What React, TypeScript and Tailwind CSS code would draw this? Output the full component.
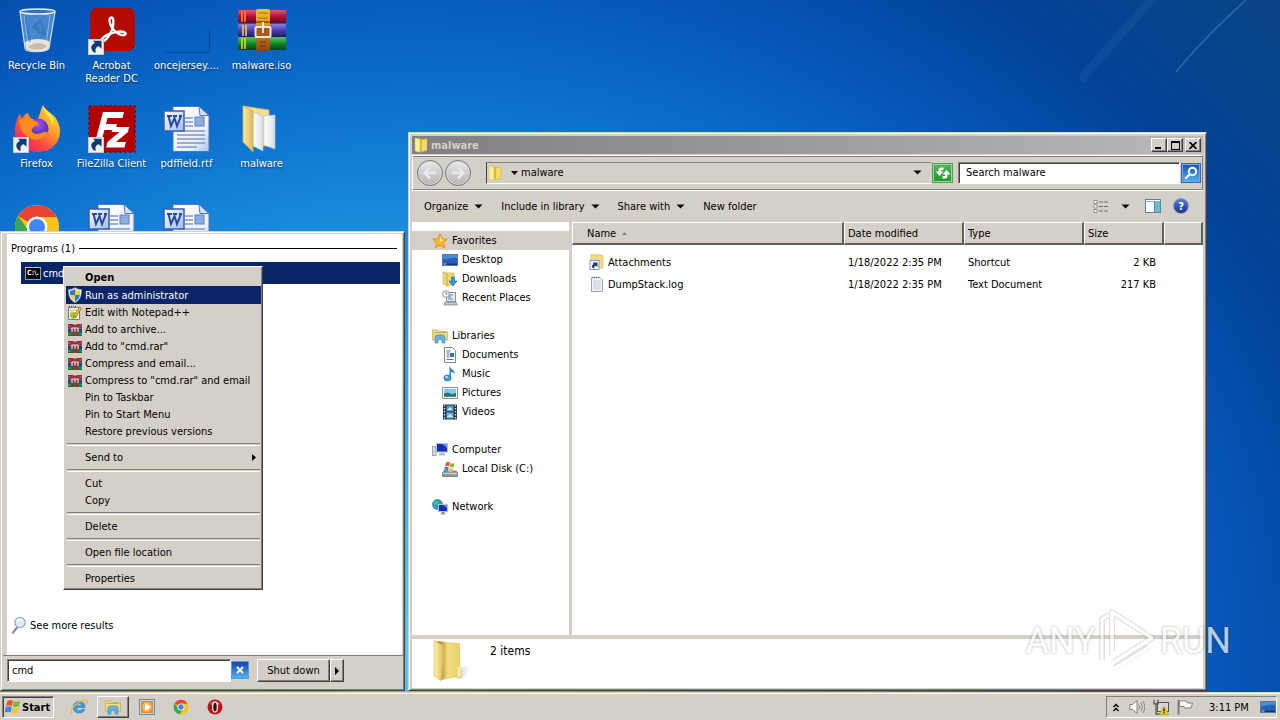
import type { ReactNode } from "react";

/* ---------- small building blocks ---------- */

function Svg({ box, size, children }: { box: string; size: string; children: ReactNode }) {
  return (
    <svg viewBox={box} className={`block shrink-0 ${size}`} aria-hidden="true">
      {children}
    </svg>
  );
}

const ShortcutArrow = () => (
  <g>
    <rect x="0.5" y="32.5" width="15" height="15" fill="#eef2f8" stroke="#c5ccd8" />
    <path d="M6 45.500c-4-3.500-3.500-8 1-9.500L5 33.800h8.500v8l-2.600-2.600c-3 .8-4.200 3-2.900 6.300z" fill="#15396f" />
  </g>
);

/* ---------- desktop icons, 48 px ---------- */

const RecycleBin = () => (
  <Svg box="0 0 48 48" size="size-12">
    <path d="M7 5l5 36c0 5 22 5 24 0l6-36z" fill="#9cc6ee" fillOpacity=".45" />
    <path d="M12 35l1 6c2 5 21 5 23 0l1-6c-5-4-19-4-25 0z" fill="#e9e4dc" />
    <path d="M15 40c5-5 14-5 19-1-1 4-15 5-19 1z" fill="#c7bcb0" />
    <path d="M12 9l5 26M20 20l8-6 4 14z" stroke="#2670b8" strokeOpacity=".5" strokeWidth="2" fill="#3a80c4" fillOpacity=".35" />
    <path d="M31 9l-9 9 6 12 8-16" stroke="#2670b8" strokeOpacity=".35" strokeWidth="1.500" fill="none" />
    <path d="M11 8l4 30M37 8l-4 30" stroke="#d7ebfa" strokeOpacity=".5" fill="none" />
    <path d="M7 5l5 36c0 5 22 5 24 0l6-36" fill="none" stroke="#cfe2f2" strokeWidth="1.200" />
    <ellipse cx="24.500" cy="4.500" rx="17.500" ry="2.600" fill="#3374b8" stroke="#e2edf6" strokeWidth="1.500" />
  </Svg>
);

const Acrobat = () => (
  <Svg box="0 0 48 48" size="size-12">
    <rect x="2" y="1" width="45" height="43" rx="7" fill="#b30b00" />
    <path
      d="M13 34c3 2 8-4 11-11 2-6 2-12-.5-12.500-3-.2-2.500 6 1 11 3 4.500 9 7.500 12 6.500 2.500-1.200 1-3.500-4-3.500-7 0-18 4-19.500 9.500z"
      fill="none"
      stroke="#fff"
      strokeWidth="2.400"
      strokeLinejoin="round"
    />
    <ShortcutArrow />
  </Svg>
);

const BlankThumb = () => (
  <Svg box="0 0 48 48" size="size-12">
    <path d="M46.500 22v23.500H2" fill="none" stroke="#02306f" strokeOpacity=".45" strokeWidth="1.200" />
  </Svg>
);

const WinRar = () => (
  <Svg box="0 0 48 48" size="size-12">
    <defs>
      <linearGradient id="wr-r" x2="0" y2="1"><stop offset="0" stopColor="#e05a6c" /><stop offset=".5" stopColor="#b31236" /><stop offset="1" stopColor="#5e0a20" /></linearGradient>
      <linearGradient id="wr-b" x2="0" y2="1"><stop offset="0" stopColor="#8a80e0" /><stop offset=".5" stopColor="#4a3cb0" /><stop offset="1" stopColor="#211860" /></linearGradient>
      <linearGradient id="wr-g" x2="0" y2="1"><stop offset="0" stopColor="#58c860" /><stop offset=".5" stopColor="#128a28" /><stop offset="1" stopColor="#06420f" /></linearGradient>
      <linearGradient id="wr-s" x2="0" y2="1"><stop offset="0" stopColor="#f6c52c" /><stop offset=".6" stopColor="#c77a1e" /><stop offset="1" stopColor="#8a4512" /></linearGradient>
    </defs>
    <rect x="0" y="3" width="49" height="13" rx="2" fill="url(#wr-r)" />
    <rect x="0" y="17" width="49" height="13" rx="2" fill="url(#wr-b)" />
    <rect x="0" y="30" width="49" height="13" rx="2" fill="url(#wr-g)" />
    <path d="M4 4v11M7 4v11" stroke="#f08820" strokeWidth="1.600" />
    <path d="M5 18v11M8 18v11" stroke="#f2d23a" strokeWidth="1.600" />
    <path d="M4 31v11M7 31v11" stroke="#e6d430" strokeWidth="1.600" />
    <rect x="18" y="2" width="14" height="42" rx="2" fill="url(#wr-s)" />
    <path d="M20 6h10M20 11h10" stroke="#a8690f" />
    <path d="M18 15h14" stroke="#8a4512" strokeWidth="1.500" />
    <rect x="17.500" y="20" width="15" height="10" rx="1.500" fill="#a85a1c" stroke="#efe6da" strokeWidth="2" />
    <path d="M25 15v11" stroke="#fff" strokeWidth="1.600" />
    <path d="M22 35h6M22 39h6" stroke="#6b3510" strokeWidth="1.200" />
  </Svg>
);

const Firefox = () => (
  <Svg box="0 0 48 48" size="size-12">
    <defs>
      <linearGradient id="ff-o" x1="1" y1="0" x2=".2" y2="1"><stop offset="0" stopColor="#fff24a" /><stop offset=".4" stopColor="#ffa32a" /><stop offset=".7" stopColor="#ff4a3f" /><stop offset="1" stopColor="#e0206c" /></linearGradient>
      <radialGradient id="ff-p" cx=".5" cy=".3"><stop offset="0" stopColor="#b14cf0" /><stop offset="1" stopColor="#4a38b8" /></radialGradient>
    </defs>
    <path d="M30 0c2 5 8 8 12 12 3 4 5 9 5 14 0 12-9 21-22 21S2 38 2 26c0-7 2-13 5-17l2 5c1-3 3-5 6-6 1 4 4 7 9 7 3-4 3-9 6-15z" fill="url(#ff-o)" />
    <circle cx="25" cy="24" r="10.500" fill="url(#ff-p)" />
    <path d="M6 15c5-4 10-3 12 0 4 0 7 2 8 5-3 0-6 2-7 4s1 5 5 5c5 0 7-3 11-2-2 7-11 10-18 6S6 24 6 15z" fill="#ff8a1e" />
    <path d="M30 1c1 8 8 10 9 19 4-5 0-10-3-13-3-2-5-4-6-6z" fill="#ffe83c" />
    <ShortcutArrow />
  </Svg>
);

const FileZilla = () => (
  <Svg box="0 0 48 48" size="size-12">
    <rect x="1" y="1" width="46" height="46" fill="#b30000" stroke="#7c0a12" strokeWidth="1.500" strokeDasharray="3 2" />
    <path d="M15 7h21l-1.500 6H19.500l-1.500 6h11l-1.500 6H16.500L13 37H7z" fill="#fff" />
    <path d="M25 22h16l-1 5-12 10h10l-1.500 5.500H18l1.500-5.500 12-10h-8z" fill="#fff" />
    <ShortcutArrow />
  </Svg>
);

const WordDoc = () => (
  <Svg box="0 0 48 48" size="size-12">
    <defs>
      <linearGradient id="wd-p" x2="1" y2="1"><stop offset="0" stopColor="#fff" /><stop offset=".7" stopColor="#eaf1fc" /><stop offset="1" stopColor="#a9c4ee" /></linearGradient>
      <linearGradient id="wd-b" x2="1" y2="1"><stop offset="0" stopColor="#fff" /><stop offset="1" stopColor="#9dbcf0" /></linearGradient>
    </defs>
    <path d="M10 1.500h26l10 9v36H10z" fill="url(#wd-p)" stroke="#5573b8" />
    <path d="M36 1.500l1 9h9z" fill="#d5e2f8" stroke="#5573b8" />
    <rect x="32" y="12" width="9" height="9" fill="#8facdf" stroke="#5f7fc0" />
    <path d="M22 13h8M22 17h8M22 21h8M14 26h28M14 30h28M14 34h28M14 38h28M14 42h20" stroke="#7f96c8" strokeWidth="1.300" />
    <rect x="1" y="6" width="20" height="20" fill="url(#wd-b)" stroke="#3a5cae" strokeWidth="1.500" />
    <path d="M4 11h5M5.500 11l2.500 10 3.500-8 2.500 8 4-10M10 11h4M16 11h3" fill="none" stroke="#27479c" strokeWidth="2" />
  </Svg>
);

const FolderOpen = () => (
  <Svg box="0 0 48 48" size="size-12">
    <defs>
      <linearGradient id="fo-f" x2="1"><stop offset="0" stopColor="#f8e9a4" /><stop offset="1" stopColor="#dcb75c" /></linearGradient>
      <linearGradient id="fo-p" x2="1"><stop offset="0" stopColor="#fff" /><stop offset="1" stopColor="#d8dde4" /></linearGradient>
    </defs>
    <path d="M5 1l26 4v36H14z" fill="#f1dd94" stroke="#d0b060" strokeWidth=".8" />
    <path d="M15 7l10 4v35l-10-5z" fill="url(#fo-p)" stroke="#c3c3c3" strokeWidth=".6" />
    <path d="M26 11l11-1v34l-11-4z" fill="url(#fo-p)" stroke="#c3c3c3" strokeWidth=".6" />
    <path d="M5 1l10 5v41L5 37z" fill="url(#fo-f)" stroke="#cfae58" strokeWidth=".8" />
  </Svg>
);

const Chrome = ({ size = "size-12", shortcut = false }: { size?: string; shortcut?: boolean }) => (
  <Svg box="0 0 48 48" size={size}>
    <circle cx="24" cy="24" r="22" fill="#fbc116" />
    <path d="M24 24L5 13A22 22 0 0 1 43.500 14H24z" fill="#ea4335" />
    <path d="M5 13a22 22 0 0 0 16 33l10-17-7-5-8 4z" fill="#34a853" />
    <path d="M24 14h19.500A22 22 0 0 1 21 46l11-18z" fill="#fbc116" />
    <circle cx="24" cy="24" r="10.500" fill="#fff" />
    <circle cx="24" cy="24" r="8" fill="#4285f4" />
    {shortcut && <ShortcutArrow />}
  </Svg>
);

/* ---------- 16 px icons ---------- */

const MiniFolder = ({ size = "size-4" }: { size?: string }) => (
  <Svg box="0 0 16 16" size={size}>
    <path d="M5 1.500l8 1V13l-8 2z" fill="#d9b73c" />
    <path d="M8.500 3l5.500-1.500v12L8.500 15z" fill="#f3dc68" stroke="#c9a93a" strokeWidth=".5" />
    <path d="M2 .8l5 1.700V15.500L2 14z" fill="#fbee9c" stroke="#d6b84a" strokeWidth=".5" />
  </Svg>
);

const BigFolder = () => (
  <Svg box="0 0 40 46" size="w-10 h-[46px]">
    <defs>
      <linearGradient id="bf-a" x2="1"><stop offset="0" stopColor="#fbf0a8" /><stop offset="1" stopColor="#e3c05a" /></linearGradient>
      <linearGradient id="bf-b" x2="1"><stop offset=".2" stopColor="#b8923a" /><stop offset=".5" stopColor="#f2df85" /><stop offset="1" stopColor="#e9cf68" /></linearGradient>
      <linearGradient id="bf-s" x2="1"><stop offset="0" stopColor="#777" stopOpacity=".7" /><stop offset="1" stopColor="#999" stopOpacity="0" /></linearGradient>
    </defs>
    <path d="M26 40l4-12 8-1v5l-7 7-15 3z" fill="url(#bf-s)" />
    <path d="M4 2l24 2v34l-19 3z" fill="url(#bf-b)" />
    <path d="M25 29q2-4 4 0v9l-4 1z" fill="#f8ebaa" stroke="#d9bd5c" strokeWidth=".5" />
    <path d="M2 1l9 6c1 12-1 20-2 35L2 37z" fill="url(#bf-a)" stroke="#dcc060" strokeWidth=".6" />
  </Svg>
);

const Star = () => (
  <Svg box="0 0 16 16" size="size-4">
    <path d="M8 .8l2.200 4.800 5.200.6-3.900 3.500 1.100 5.200L8 12.300l-4.600 2.600 1.100-5.200L.6 6.200l5.200-.6z" fill="#ffb52c" stroke="#e08a1c" strokeWidth=".9" />
    <path d="M8 3l1.400 3.400 3.600.4-5 1.800z" fill="#fff2a8" />
  </Svg>
);

const MonitorIcon = () => (
  <Svg box="0 0 16 16" size="size-4">
    <rect x=".5" y="2.500" width="15" height="11" fill="#2660b8" stroke="#5878a8" />
    <path d="M1 3h14v3C9 5 5 8 1 7z" fill="#4a8cd8" />
    <path d="M1 11.500h14v1.500H1z" fill="#15357a" />
    <path d="M1.500 12h3" stroke="#bcd8f0" />
  </Svg>
);

const DownloadsIcon = () => (
  <Svg box="0 0 16 16" size="size-4">
    <path d="M1 1l4 1v13l-4-2zM5 2h7v11l-7 2z" fill="#f0d870" stroke="#c9a73c" strokeWidth=".6" />
    <path d="M9.500 6h3v4h2.500l-4 5-4-5h2.500z" fill="#2f95e4" stroke="#1565ae" strokeWidth=".6" />
  </Svg>
);

const RecentIcon = () => (
  <Svg box="0 0 16 16" size="size-4">
    <rect x="4.500" y="2.500" width="9" height="9" fill="#e6ebf2" stroke="#8592a6" />
    <path d="M6 5h5M6 7h3M6 9h5" stroke="#5b7fb5" />
    <path d="M3 12h11l1.500 3H2z" fill="#c0c5cc" stroke="#7d848f" strokeWidth=".7" />
    <circle cx="4" cy="4" r="3.300" fill="#fff" stroke="#8592a6" />
    <path d="M4 2v2h1.500" stroke="#444" strokeWidth=".8" fill="none" />
  </Svg>
);

const LibraryIcon = () => (
  <Svg box="0 0 16 16" size="size-4">
    <path d="M.5 2h5l1 1.500h9V12H.5z" fill="#f2dc7c" stroke="#c9a73c" strokeWidth=".7" />
    <path d="M2 4.500h12" stroke="#8fc46a" />
    <path d="M3 15V9.500Q3 7 5.500 7h5Q13 7 13 9.500V15h-3v-4H6v4z" fill="#63b4e8" stroke="#2f7fb8" strokeWidth=".6" />
  </Svg>
);

const DocumentIcon = () => (
  <Svg box="0 0 16 16" size="size-4">
    <path d="M2.500.5h8l3 3v12h-11z" fill="#fff" stroke="#7c8798" />
    <path d="M4.500 4h4M4.500 6h3M4.500 8h3M4.500 10h3M4.500 12.500h7" stroke="#5b7396" />
    <rect x="8" y="6" width="4" height="4" fill="#2f6fc4" />
  </Svg>
);

const MusicIcon = () => (
  <Svg box="0 0 16 16" size="size-4">
    <path d="M8 .5c.5 3 5 3 4.500 8-1-2-2.500-2.500-3.500-2.500v6.500H7.500V.5z" fill="#2a86d8" />
    <ellipse cx="5.500" cy="12" rx="3.700" ry="3" fill="#3f9ce8" stroke="#1862a8" strokeWidth=".6" />
    <ellipse cx="4.700" cy="11" rx="1.500" ry="1" fill="#b8dffa" />
  </Svg>
);

const PictureIcon = () => (
  <Svg box="0 0 16 16" size="size-4">
    <rect x=".5" y="2.500" width="15" height="11" fill="#fff" stroke="#8b939e" />
    <rect x="2" y="4" width="12" height="8" fill="#7ccbf0" />
    <path d="M2 9c3-2 5-1 7 0s3-1 5-1v4H2z" fill="#236e80" />
    <path d="M2 11h12v1H2z" fill="#3da050" />
  </Svg>
);

const VideoIcon = () => (
  <Svg box="0 0 16 16" size="size-4">
    <rect x="1" y=".5" width="14" height="15" fill="#27313f" />
    <path d="M2.500 1v14M13.500 1v14" stroke="#d8dde4" strokeWidth="1.400" strokeDasharray="1.500 1.500" />
    <rect x="4.500" y="1.500" width="7" height="6" fill="#4a9ad8" />
    <rect x="4.500" y="8.500" width="7" height="6" fill="#66b2e6" />
    <path d="M5 6l3-3 3 3zM5 13l3-3 3 3z" fill="#cdeaf8" />
  </Svg>
);

const ComputerIcon = () => (
  <Svg box="0 0 16 16" size="size-4">
    <rect x=".5" y="4.500" width="3.500" height="9" fill="#d3d8de" stroke="#8b939e" strokeWidth=".8" />
    <rect x="4.500" y="1.500" width="11" height="8.500" fill="#1530b0" stroke="#b6c0cf" />
    <path d="M10 2h5v4z" fill="#6f8cf0" />
    <path d="M8 10.500h4l1.500 3h-7z" fill="#b8bec8" />
  </Svg>
);

const DiskIcon = () => (
  <Svg box="0 0 16 16" size="size-4">
    <path d="M2 10h12l1.500 2v3.500H.5V12z" fill="#8f9aa6" stroke="#5c6672" strokeWidth=".7" />
    <path d="M1 12.500h14" stroke="#cbd3da" />
    <circle cx="13" cy="14" r=".9" fill="#5fdc4a" />
    <path d="M4 1.500q2-1.500 4 0L7 5.500q-2-1.200-4 0z" fill="#e8602c" />
    <path d="M8.700 2q2 1 4 0l-1 3.800q-2 1-4 0z" fill="#7cb83c" />
    <path d="M2.800 6.300q2-1.300 4 0l-1 3.700q-2-1-4 0z" fill="#3b8ad8" />
    <path d="M7.500 6.800q2 1 4 0l-1 3.600q-2 1-4 0z" fill="#f4c430" />
  </Svg>
);

const NetworkIcon = () => (
  <Svg box="0 0 16 16" size="size-4">
    <circle cx="5.500" cy="5.500" r="5" fill="#2f9ad0" stroke="#1d6a9c" strokeWidth=".6" />
    <path d="M2 3q3-2 4 0t-2 3q-2 0-2-3M7 7q2-1 2 1t-2 2z" fill="#56c06a" />
    <rect x="6.500" y="5.500" width="9" height="7" fill="#1530b0" stroke="#b6c0cf" />
    <path d="M11 6h4v3z" fill="#6f8cf0" />
    <path d="M9.500 13h3l1 2.500h-5z" fill="#8f98a8" />
  </Svg>
);

const ShortcutFolder = () => (
  <Svg box="0 0 16 16" size="size-4">
    <path d="M2 .8l9 0 3 1v12l-12 1z" fill="#f2dc7c" stroke="#cfae50" strokeWidth=".6" />
    <rect x="1" y="6.500" width="9" height="9" fill="#fff" stroke="#8898b0" />
    <path d="M4 14.300c-1.600-2-1.200-3.600.6-4.400L3.600 8.600h4.900v4.600L7 11.800c-1.400.3-2 1.100-1.600 2.500z" fill="#15396f" />
  </Svg>
);

const LogFile = () => (
  <Svg box="0 0 16 16" size="size-4">
    <path d="M2.500 1.500h8.500l2.500 2.500v11.500h-11z" fill="#f6f8fa" stroke="#98a2ae" />
    <path d="M4 5h8M4 7h8M4 9h8M4 11h8M4 13h8" stroke="#b3c3d3" strokeWidth=".9" />
    <path d="M3 1.500h8" stroke="#6f7a88" strokeWidth="1.500" strokeDasharray="1 1" />
  </Svg>
);

const Shield = () => (
  <Svg box="0 0 16 16" size="size-4">
    <path d="M8 .5C6 2 4 2.500 1.500 2.500c0 6 1 10.500 6.500 13 5.500-2.500 6.500-7 6.500-13C12 2.500 10 2 8 .5z" fill="#eef2f6" stroke="#9aa6b4" strokeWidth=".6" />
    <path d="M8 2C6.500 3 5 3.600 3 3.700V8h5z" fill="#2c78d0" />
    <path d="M8 2c1.500 1 3 1.600 5 1.700V8H8z" fill="#f8d23c" />
    <path d="M3.100 8c.5 3 2 5 4.900 6.300V8z" fill="#f8d23c" />
    <path d="M12.900 8c-.5 3-2 5-4.900 6.300V8z" fill="#2c78d0" />
  </Svg>
);

const NotepadIcon = () => (
  <Svg box="0 0 16 16" size="size-4">
    <path d="M1.500 2.500h11v12h-11z" fill="#fbfbf4" stroke="#77806a" />
    <path d="M3 5h8M3 7h4" stroke="#b0b8a0" />
    <path d="M3 8l4-1 4 2-1 4-5 1-2-2z" fill="#9ccc3c" />
    <path d="M7 10l5.500-8 2 1.500-5.500 8-2.500 1z" fill="#f2b632" stroke="#8a5a14" strokeWidth=".6" />
    <path d="M2 1.500h8" stroke="#555" strokeDasharray="1 1" />
  </Svg>
);

const RarIcon = () => (
  <Svg box="0 0 16 16" size="size-4">
    <rect x="1" y="2" width="14" height="4.500" fill="#a81c34" />
    <rect x="1" y="6.500" width="14" height="4" fill="#3a3f80" />
    <rect x="1" y="10" width="14" height="4" fill="#107030" />
    <path d="M1 4h3M12 4h3M1 12h3M12 12h3" stroke="#35a8a8" />
    <rect x="5.500" y="2" width="5" height="12" fill="#8a3a30" />
    <path d="M5 10V6h6v4M8 6v3.500" fill="none" stroke="#f2dcdc" strokeWidth="1.200" />
    <path d="M6 2.500h4" stroke="#d08050" />
  </Svg>
);

const CmdIcon = () => (
  <span className="flex h-[13px] w-4 shrink-0 items-center justify-center border border-t-[#b8c4dc] border-[#9a9a9a] bg-black pt-px text-[7px] leading-none font-bold text-white">
    C:\.
  </span>
);

const Flag4 = ({ size = "size-4" }: { size?: string }) => (
  <Svg box="0 0 16 16" size={size}>
    <path d="M2.500 2q3-2 5.500-.3L7 7Q4 5.500 1 7z" fill="#e8532a" />
    <path d="M8.800 2q3 1.500 6.200 0L14 7.300q-3 1.500-6 0z" fill="#7db83a" />
    <path d="M.8 8q3-1.500 6 .2L5.700 13.500Q3 12-.2 13.500z" fill="#3f86d6" />
    <path d="M7.700 8.600q3 1.500 6 0l-1 5.200q-3 1.700-6 0z" fill="#f6c52e" />
  </Svg>
);

const Caret = () => (
  <Svg box="0 0 9 5" size="w-[9px] h-[5px]">
    <path d="M.5.500h8L4.500 4.500z" fill="#000" />
  </Svg>
);

/* ---------- desktop ---------- */

const desktopIcons: { label: string; icon: ReactNode }[] = [
  { label: "Recycle Bin", icon: <RecycleBin /> },
  { label: "Acrobat Reader DC", icon: <Acrobat /> },
  { label: "oncejersey....", icon: <BlankThumb /> },
  { label: "malware.iso", icon: <WinRar /> },
  { label: "Firefox", icon: <Firefox /> },
  { label: "FileZilla Client", icon: <FileZilla /> },
  { label: "pdffield.rtf", icon: <WordDoc /> },
  { label: "malware", icon: <FolderOpen /> },
  { label: "", icon: <Chrome shortcut /> },
  { label: "", icon: <WordDoc /> },
  { label: "", icon: <WordDoc /> },
];

function Desktop() {
  return (
    <ul className="-ml-px grid w-[300px] auto-rows-[98px] grid-cols-4">
      {desktopIcons.map((d, i) => (
        <li key={i} className="flex flex-col items-center pt-[7px]">
          {d.icon}
          <span className="mt-1 w-[74px] text-center leading-[13px] text-white [text-shadow:0_1px_2px_#000a]">{d.label}</span>
        </li>
      ))}
    </ul>
  );
}

/* ---------- start menu ---------- */

type Item = { label: string; icon?: ReactNode; bold?: boolean; active?: boolean; sub?: boolean; tall?: boolean };

const contextGroups: Item[][] = [
  [
    { label: "Open", bold: true, tall: true },
    { label: "Run as administrator", icon: <Shield />, active: true, tall: true },
    { label: "Edit with Notepad++", icon: <NotepadIcon /> },
    { label: "Add to archive...", icon: <RarIcon /> },
    { label: 'Add to "cmd.rar"', icon: <RarIcon /> },
    { label: "Compress and email...", icon: <RarIcon /> },
    { label: 'Compress to "cmd.rar" and email', icon: <RarIcon /> },
    { label: "Pin to Taskbar" },
    { label: "Pin to Start Menu" },
    { label: "Restore previous versions" },
  ],
  [{ label: "Send to", sub: true }],
  [{ label: "Cut" }, { label: "Copy" }],
  [{ label: "Delete" }],
  [{ label: "Open file location" }],
  [{ label: "Properties" }],
];

function ContextMenu() {
  return (
    <div
      role="menu"
      className="absolute top-8 left-14 w-[200px] border border-t-white border-r-[#404040] border-b-[#404040] border-l-white bg-[#d4d0c8] p-px pl-[2px] pb-[2px] shadow-[inset_-1px_-1px_0_#808080]"
    >
      {contextGroups.map((group, g) => (
        <div key={g}>
          {g > 0 && <div className="mx-px my-[3px] h-[3px] border-t border-b border-t-[#808080] border-b-white" />}
          {group.map((item) => (
            <button
              key={item.label}
              role="menuitem"
              className={`flex w-full items-center pr-[5px] pl-px text-left whitespace-nowrap ${item.tall ? "h-[18px]" : "h-[17px]"} ${
                item.active ? "bg-[#0a246a] text-white" : ""
              } ${item.bold ? "font-bold" : ""}`}
            >
              <span className="mr-px w-[17px] shrink-0">{item.icon}</span>
              <span className="flex-1">{item.label}</span>
              {item.sub && (
                <Svg box="0 0 4 7" size="w-1 h-[7px]">
                  <path d="M0 0l4 3.500L0 7z" fill="#000" />
                </Svg>
              )}
            </button>
          ))}
        </div>
      ))}
    </div>
  );
}

const raised = "border border-t-white border-l-white border-r-[#404040] border-b-[#404040] shadow-[inset_-1px_-1px_0_#808080] bg-[#d4d0c8]";
const sunken = "border border-t-[#808080] border-l-[#808080] border-r-white border-b-white shadow-[inset_1px_1px_0_#404040]";

function StartMenu() {
  return (
    <section
      aria-label="Start menu"
      className="absolute bottom-px left-0 flex h-[460px] w-[405px] flex-col border border-t-[#d4d0c8] border-r-[#404040] border-b-[#404040] border-l-[#d4d0c8] bg-[#d4d0c8] p-px pl-[2px] shadow-[inset_1px_1px_0_#fff,inset_-1px_-1px_0_#808080]"
    >
      <div className="relative mt-px mr-px ml-1 flex flex-1 flex-col bg-white">
        <div className="flex h-7 items-center gap-[7px] pr-[5px] pl-1">
          <span className="w-[61px] whitespace-nowrap">Programs (1)</span>
          <span className="h-px flex-1 bg-black" />
        </div>
        <button className="mr-[2px] ml-[14px] flex h-[22px] items-center gap-[2px] bg-[#0a246a] pl-1 text-white">
          <CmdIcon />
          cmd
        </button>
        <div className="flex-1" />
        <a href="#results" className="mb-5 ml-1 flex h-5 items-center gap-[3px]">
          <Svg box="0 0 16 18" size="w-4 h-[18px]">
            <path d="M6.500 11L2 16.500" stroke="#8c8f94" strokeWidth="2.400" strokeLinecap="round" />
            <circle cx="9" cy="6.500" r="5.200" fill="#d7ebfa" stroke="#9aa5b0" strokeWidth="1.200" />
            <path d="M6 5.500q2-3 5-1.500" stroke="#fff" strokeWidth="1.500" fill="none" />
          </Svg>
          See more results
        </a>
        <ContextMenu />
      </div>
      <div className="flex h-[34px] items-start border-t border-[#808080] pt-[3px] pl-1">
        <input
          aria-label="Search programs and files"
          defaultValue="cmd"
          className={`h-[23px] w-[224px] bg-white px-1 outline-none ${sunken}`}
        />
        <button aria-label="Clear search" className="mt-[2px] flex h-[18px] w-[18px] items-center justify-center border border-[#5c9bd8] bg-linear-to-b from-[#1c3fae] to-[#4fb4ec]">
          <Svg box="0 0 8 8" size="size-2">
            <path d="M1 1l6 6M7 1L1 7" stroke="#fff" strokeWidth="1.800" />
          </Svg>
        </button>
        <div className="ml-2 flex">
          <button className={`h-[23px] w-[73px] ${raised}`}>Shut down</button>
          <button aria-label="Shut down options" className={`flex h-[23px] w-[14px] items-center justify-center ${raised}`}>
            <Svg box="0 0 4 8" size="w-1 h-2">
              <path d="M0 0l4 4-4 4z" fill="#000" />
            </Svg>
          </button>
        </div>
      </div>
    </section>
  );
}

/* ---------- explorer window ---------- */

const navGroups: { head: string; icon: ReactNode; active?: boolean; items: { label: string; icon: ReactNode }[] }[] = [
  {
    head: "Favorites",
    icon: <Star />,
    active: true,
    items: [
      { label: "Desktop", icon: <MonitorIcon /> },
      { label: "Downloads", icon: <DownloadsIcon /> },
      { label: "Recent Places", icon: <RecentIcon /> },
    ],
  },
  {
    head: "Libraries",
    icon: <LibraryIcon />,
    items: [
      { label: "Documents", icon: <DocumentIcon /> },
      { label: "Music", icon: <MusicIcon /> },
      { label: "Pictures", icon: <PictureIcon /> },
      { label: "Videos", icon: <VideoIcon /> },
    ],
  },
  { head: "Computer", icon: <ComputerIcon />, items: [{ label: "Local Disk (C:)", icon: <DiskIcon /> }] },
  { head: "Network", icon: <NetworkIcon />, items: [] },
];

const files = [
  { name: "Attachments", icon: <ShortcutFolder />, date: "1/18/2022 2:35 PM", type: "Shortcut", size: "2 KB" },
  { name: "DumpStack.log", icon: <LogFile />, date: "1/18/2022 2:35 PM", type: "Text Document", size: "217 KB" },
];

const th =
  "h-[23px] border-t border-r-2 border-b-2 border-l border-t-white border-r-[#606060] border-b-[#606060] border-l-white bg-[#d4d0c8] px-[3px] text-left font-normal";

const RoundNav = ({ back = false }: { back?: boolean }) => (
  <button
    aria-label={back ? "Back" : "Forward"}
    className="flex size-[26px] items-center justify-center rounded-full border border-[#777] bg-linear-to-b from-[#e9e9e9] to-[#b5b5b5] shadow-[inset_0_0_0_1px_#dcdcdc]"
  >
    <Svg box="0 0 14 14" size="size-[14px]">
      <path d={back ? "M7 1.500L1.500 7 7 12.500M2 7h11" : "M7 1.500L12.500 7 7 12.500M12 7H1"} fill="none" stroke="#e9e9e9" strokeWidth="2.600" />
    </Svg>
  </button>
);

const caption = `flex h-[14px] items-center justify-center ${raised}`;

function Explorer() {
  return (
    <section
      aria-label="malware"
      className="absolute top-[132px] right-[73px] bottom-px left-[408px] flex flex-col border border-t-[#d4d0c8] border-r-[#404040] border-b-[#404040] border-l-[#d4d0c8] bg-[#d4d0c8] p-[3px] pb-[2px] shadow-[inset_1px_1px_0_#fff,inset_-1px_-1px_0_#808080]"
    >
      <header className="flex h-[18px] items-center gap-[2px] bg-linear-to-r from-[#808080] to-[#b9b9b7] pr-[2px] pl-px">
        <MiniFolder />
        <h1 className="flex-1 font-bold text-[#d4d0c8]">malware</h1>
        <div className="flex">
          <button aria-label="Minimize" className={`w-4 ${caption}`}>
            <span className="mt-[6px] mr-[2px] h-[2px] w-[6px] bg-black" />
          </button>
          <button aria-label="Maximize" className={`w-4 ${caption}`}>
            <span className="h-[9px] w-[9px] border border-t-2 border-black" />
          </button>
          <button aria-label="Close" className={`ml-[2px] w-4 ${caption}`}>
            <Svg box="0 0 8 7" size="w-2 h-[7px]">
              <path d="M.5 0l7 7M7.500 0l-7 7" stroke="#000" strokeWidth="1.600" />
            </Svg>
          </button>
        </div>
      </header>

      <div className="mt-px flex h-[35px] items-center border border-t-white border-r-[#808080] border-b-[#808080] border-l-white pr-px pl-1 shadow-[0_1px_0_#fff,inset_0_1px_0_#808080]">
        <div className="flex gap-[2px]">
          <RoundNav back />
          <RoundNav />
        </div>
        <div className="ml-[15px] flex h-[22px] flex-1 items-center border border-t-[#808080] border-r-[#d4d0c8] border-b-white border-l-[#404040] pr-[9px]">
          <MiniFolder />
          <Svg box="0 0 7 4" size="ml-2 w-[7px] h-1">
            <path d="M0 0h7L3.500 4z" fill="#000" />
          </Svg>
          <span className="ml-[3px] flex-1">malware</span>
          <button aria-label="Previous locations">
            <Caret />
          </button>
        </div>
        <button aria-label="Refresh" className="flex h-5 w-[21px] items-center justify-center border border-[#5a9a5a] bg-linear-to-b from-[#53b45a] to-[#159a2a] shadow-[inset_0_0_0_1px_#8fd896]">
          <Svg box="0 0 18 14" size="w-[18px] h-[14px]">
            <path d="M9.500 1.500H7Q4.500 1.500 4.500 4v1.500H1.500L5.500 10l4-4.500H7V4h2.500zM8.500 12.500H11q2.500 0 2.500-2.500V8.500h3L12.500 4l-4 4.500H11V10H8.500z" fill="#fff" />
          </Svg>
        </button>
        <input
          aria-label="Search malware"
          defaultValue="Search malware"
          className={`ml-[5px] h-[22px] w-[222px] bg-white px-[7px] outline-none ${sunken}`}
        />
        <button aria-label="Search" className="ml-px flex h-5 w-5 items-center justify-center border border-[#3a64c0] bg-linear-to-b from-[#2848c0] to-[#49b6f0] shadow-[inset_0_0_0_1px_#7aa4e8]">
          <Svg box="0 0 14 14" size="size-[14px]">
            <path d="M5.500 8.500L2 12" stroke="#fff" strokeWidth="2.400" strokeLinecap="round" />
            <circle cx="8.500" cy="5.500" r="3.700" fill="none" stroke="#fff" strokeWidth="2" />
          </Svg>
        </button>
      </div>

      <div role="toolbar" className="flex h-8 items-center gap-[18px] pr-[14px] pl-3 whitespace-nowrap">
        <button className="flex items-center gap-[6px]">
          Organize
          <Caret />
        </button>
        <button className="flex items-center gap-[6px]">
          Include in library
          <Caret />
        </button>
        <button className="flex items-center gap-[6px]">
          Share with
          <Caret />
        </button>
        <button>New folder</button>
        <div className="ml-auto flex items-center gap-3">
          <button aria-label="Change view">
            <Svg box="0 0 16 13" size="w-4 h-[13px]">
              <path d="M1 .5h3v3H1zM1 5h3v3H1zM1 9.500h3v3H1z" fill="#fff" stroke="#777" strokeWidth=".8" />
              <path d="M6 2h4M11 2h4M6 6.500h4M11 6.500h4M6 11h4M11 11h4" stroke="#66708a" />
            </Svg>
          </button>
          <button aria-label="More view options" className="mr-[3px]">
            <Caret />
          </button>
          <button aria-label="Preview pane">
            <Svg box="0 0 16 14" size="w-4 h-[14px]">
              <rect x=".5" y=".5" width="15" height="13" fill="#fff" stroke="#5f7ea8" />
              <path d="M.5 2.500h15" stroke="#8fb0d4" />
              <rect x="10" y="3" width="5" height="10" fill="#5cc4d0" />
              <path d="M9.500 2v12" stroke="#5f7ea8" />
            </Svg>
          </button>
          <button aria-label="Help" className="flex size-4 items-center justify-center rounded-full border border-[#8a98b8] bg-linear-to-b from-[#5a7cd8] to-[#1a2f96] text-[11px] leading-none font-bold text-white">
            ?
          </button>
        </div>
      </div>

      <div className="flex min-h-0 flex-1">
        <nav className="w-[157px] bg-white pt-[9px]">
          {navGroups.map((g) => (
            <div key={g.head} className="mb-[19px]">
              <a href="#nav" className={`flex h-[19px] items-center gap-1 pl-5 ${g.active ? "bg-[#d4d0c8]" : ""}`}>
                {g.icon}
                {g.head}
              </a>
              {g.items.map((it) => (
                <a key={it.label} href="#nav" className="flex h-[19px] items-center gap-1 pl-[30px]">
                  {it.icon}
                  {it.label}
                </a>
              ))}
            </div>
          ))}
        </nav>
        <div className="w-[3px] bg-[#d4d0c8]" />
        <div className="min-w-0 flex-1 bg-white">
          <table className="w-full table-fixed border-separate border-spacing-0">
            <colgroup>
              <col className="w-[272px]" />
              <col className="w-[120px]" />
              <col className="w-[120px]" />
              <col className="w-[80px]" />
              <col />
            </colgroup>
            <thead>
              <tr>
                <th className={th}>
                  <span className="flex items-center gap-[6px] pl-[11px]">
                    Name
                    <Svg box="0 0 5 3" size="w-[5px] h-[3px]">
                      <path d="M0 3h5L2.500 0z" fill="#808080" />
                    </Svg>
                  </span>
                </th>
                <th className={th}>Date modified</th>
                <th className={th}>Type</th>
                <th className={th}>Size</th>
                <th className={th} aria-label="More columns" />
              </tr>
            </thead>
            <tbody>
              <tr aria-hidden="true">
                <td colSpan={5} className="h-[6px]" />
              </tr>
              {files.map((f) => (
                <tr key={f.name}>
                  <td className="h-[22px] pl-[17px]">
                    <span className="flex items-center gap-[3px]">
                      {f.icon}
                      {f.name}
                    </span>
                  </td>
                  <td className="pl-1">{f.date}</td>
                  <td className="pl-1">{f.type}</td>
                  <td className="pr-2 text-right">{f.size}</td>
                  <td />
                </tr>
              ))}
            </tbody>
          </table>
        </div>
      </div>

      <footer className="flex h-[53px] items-start border-t-4 border-[#d4d0c8] bg-white pl-5">
        <BigFolder />
        <span className="ml-[18px] pt-1 text-xs leading-4">2 items</span>
      </footer>
    </section>
  );
}

/* ---------- watermark ---------- */

function Watermark() {
  return (
    <div className="pointer-events-none absolute right-[49px] bottom-[18px] flex h-[66px] items-center gap-[2px] font-[Roboto] text-[36px] leading-none text-white opacity-70 [text-shadow:0_0_3px_#0007]">
      <span>ANY</span>
      <Svg box="0 0 60 66" size="w-[60px] h-[66px]">
        <g fill="none" strokeLinejoin="round">
          <path d="M14 47V4l40 26-38 24M4 52V11l7-4M14 61l36-22" stroke="#888" strokeOpacity=".35" strokeWidth="6" />
          <path d="M14 47V4l40 26-38 24M14 47l22-14M14 62l36-22M14 54v8" stroke="#fff" strokeWidth="3.500" />
          <path d="M4 52V11l7-4M4 52l7 4" stroke="#fff" strokeWidth="3" />
        </g>
      </Svg>
      <span>RUN</span>
    </div>
  );
}

/* ---------- taskbar ---------- */

function Taskbar() {
  return (
    <footer className="flex h-7 items-center border-t border-[#d4d0c8] bg-[#d4d0c8] pr-[3px] pl-[2px] shadow-[inset_0_1px_0_#fff]">
      <button className={`mt-px flex h-[22px] w-[52px] items-center gap-px pl-[2px] font-bold ${sunken}`}>
        <Flag4 />
        Start
      </button>
      <div className="ml-4 flex items-center">
        <button aria-label="Internet Explorer">
          <Svg box="0 0 18 18" size="size-[18px]">
            <path d="M15 9.500H6q.5 3 3.500 3 2 0 2.800-1.500h2.500Q13.500 15 9.500 15q-6 0-6.200-5.500Q3.500 3.500 9.500 3.500q5.700 0 5.500 6zM6 7.800h6.200Q11.500 5.700 9.200 5.700T6 7.800z" fill="#3aa0e4" stroke="#1f7cc4" strokeWidth=".6" />
            <path d="M2 15.500Q-.5 12 6 6.500T16.500 2q1.500 1.500-.5 4.500" fill="none" stroke="#e8b93a" strokeWidth="1.300" />
          </Svg>
        </button>
        <button aria-label="Windows Explorer" className={`ml-[9px] flex h-[22px] w-8 items-center justify-center ${raised}`}>
          <LibraryIcon />
        </button>
        <button aria-label="Media Player" className="ml-[10px]">
          <Svg box="0 0 16 16" size="size-4">
            <rect x=".5" y=".5" width="15" height="15" fill="#b9d8f0" stroke="#5f8db8" />
            <rect x="2" y="2" width="12" height="12" fill="#f08c1c" />
            <circle cx="8" cy="8" r="4.800" fill="#f8b860" />
            <path d="M6 4l6 4-6 4z" fill="#fff" />
          </Svg>
        </button>
        <button aria-label="Chrome" className="ml-[18px]">
          <Chrome size="size-4" />
        </button>
        <button aria-label="Opera" className="ml-[18px]">
          <Svg box="0 0 16 16" size="size-4">
            <circle cx="8" cy="8" r="7.500" fill="#b81420" />
            <path d="M3 5a6 6 0 0 1 10 0q-5 3-10 0z" fill="#e86a6a" />
            <ellipse cx="8" cy="8" rx="2.400" ry="5" fill="#4a0508" stroke="#f4dcdc" strokeWidth="1.400" />
          </Svg>
        </button>
      </div>
      <div className="flex-1" />
      <div className="mt-px flex h-[22px] w-[171px] items-center border border-t-[#808080] border-r-white border-b-white border-l-[#808080] pl-[6px]">
        <button aria-label="Show hidden icons">
          <Svg box="0 0 6 9" size="w-[6px] h-[9px]">
            <path d="M.5 4L3 1.500 5.500 4M.5 8L3 5.500 5.500 8" fill="none" stroke="#000" strokeWidth="1.300" />
          </Svg>
        </button>
        <button aria-label="Volume" className="ml-[10px]">
          <Svg box="0 0 16 16" size="size-4">
            <path d="M.8 5.500h2.700L8 1.500v13l-4.500-4H.8z" fill="#f4f4f4" stroke="#777" strokeWidth=".9" />
            <path d="M10 5.500q1.500 2.500 0 5M12 3.500q2.800 4.500 0 9M14 2q3.500 6 0 12" fill="none" stroke="#888" strokeWidth="1" />
          </Svg>
        </button>
        <button aria-label="Network" className="ml-2">
          <Svg box="0 0 16 16" size="size-4">
            <rect x="4.500" y="3.500" width="11" height="9" fill="#d8d8d8" stroke="#555" />
            <path d="M1 .8v4h4v-4M3 5v10h5" fill="none" stroke="#555" strokeWidth="1.300" />
            <path d="M11 7l4.800 8.500H6.200z" fill="#f6cf1c" stroke="#a88a10" strokeWidth=".6" />
            <path d="M11 9.500v3M11 13.300v1.200" stroke="#000" strokeWidth="1.200" />
          </Svg>
        </button>
        <button aria-label="Action Center" className="ml-2">
          <Svg box="0 0 16 16" size="size-4">
            <path d="M1.500 1v14.500" stroke="#777" strokeWidth="1.800" />
            <path d="M2.500 2h7l1 2h5l-1.500 5H8L7 7.500H2.500z" fill="#f6f6f6" stroke="#777" strokeWidth=".9" />
          </Svg>
        </button>
        <time className="ml-4 flex-1 whitespace-nowrap">3:11 PM</time>
        <button aria-label="Show desktop">
          <MonitorIcon />
        </button>
      </div>
    </footer>
  );
}

export default function App() {
  return (
    <div className="flex min-h-screen flex-col text-[11px] leading-[13px] text-black [font-family:'DejaVu_Sans_Condensed','DejaVu_Sans',sans-serif]">
      <main className="relative flex-1 overflow-hidden bg-[#0a4486] bg-[radial-gradient(ellipse_80%_125%_at_32%_95%,#5cc8e4_0%,#38ace0_25%,#1888da_52%,#0c70cc_65%,#0656b8_80%,#024296_95%,#0a4486_112%)]">
        <svg className="absolute top-0 right-0 h-[130px] w-[200px]" viewBox="0 0 200 130" aria-hidden="true">
          <path d="M166 0Q122 40 96 72" stroke="#8cc0f0" strokeOpacity=".3" strokeWidth="1.500" fill="none" />
          <path d="M80-10L0 80" stroke="#8cc0f0" strokeOpacity=".07" strokeWidth="9" fill="none" />
        </svg>
        <Desktop />
        <Explorer />
        <StartMenu />
        <Watermark />
      </main>
      <Taskbar />
    </div>
  );
}
